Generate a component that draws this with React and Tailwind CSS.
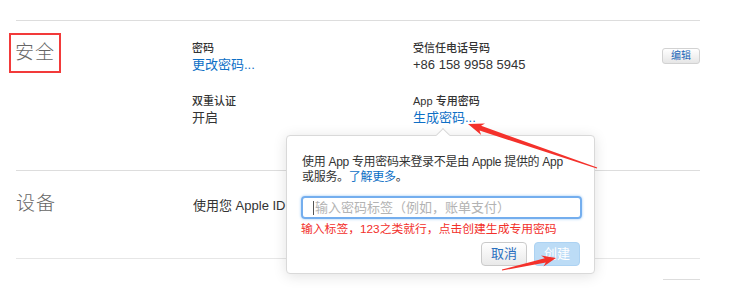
import React from "react";

const font = {
  fontFamily: '"Liberation Sans", "Noto Sans CJK SC", sans-serif',
};

const Field = ({ label, value, link }) => (
  <div className="flex flex-col">
    <span className="text-[11px] leading-[16px] text-[#333] font-medium">{label}</span>
    <span
      className={
        "text-[13px] leading-[17px] " + (link ? "text-[#0d6fc6]" : "text-[#333]")
      }
    >
      {value}
    </span>
  </div>
);

const Arrows = () => (
  <svg
    className="absolute inset-0 pointer-events-none"
    width="735"
    height="302"
    viewBox="0 0 735 302"
  >
    <polygon
      fill="#f4312b"
      points="468,124 485,123.5 481.1,125.8 597.2,167.5 596.8,168.5 479.5,130.6 481.2,134.9"
    />
    <polygon
      fill="#f4312b"
      points="556,258 541.1,255.6 544.8,258.3 501.9,269.5 502.1,270.5 545.8,262.5 543.5,266.4"
    />
  </svg>
);

const Popover = () => (
  <div className="absolute left-[286px] top-[135px] w-[309px] h-[139px] bg-white border border-[#d9d9d9] rounded-[4px] shadow-[0_2px_14px_rgba(0,0,0,0.12)]">
    <div className="absolute left-[151px] -top-[6px] w-[10px] h-[10px] bg-white border-l border-t border-[#d9d9d9] rotate-45" />
    <div className="relative px-[15px] pt-[19px]">
      <p className="text-[12px] tracking-[-0.3px] leading-[15px] text-[#333] whitespace-nowrap">
        使用 App 专用密码来登录不是由 Apple 提供的 App
        <br />
        或服务。<span className="text-[#0d6fc6]">了解更多</span>。
      </p>
      <div className="-ml-[1px] mt-[11px] w-[281px] h-[23px] border-2 border-[#74aeee] rounded-[4px] shadow-[0_0_3px_#9cc8f5] flex items-center pl-[10px] gap-[1px]">
        <span className="w-px h-[14px] bg-[#555]" />
        <span className="text-[13px] text-[#b3b3b3]">输入密码标签（例如，账单支付）</span>
      </div>
      <p className="-ml-[1px] mt-[3px] text-[11.8px] leading-[15px] text-[#f2302b] whitespace-nowrap">
        输入标签，123之类就行，点击创建生成专用密码
      </p>
      <div className="flex justify-end gap-[7px] mt-[5px] mr-[-1px]">
        <button className="w-[46px] h-[24px] rounded-[4px] border border-[#cacaca] bg-gradient-to-b from-white to-[#e9e9e9] text-[13px] text-[#2a6fbf]">
          取消
        </button>
        <button className="w-[46px] h-[24px] rounded-[4px] border border-[#acd2f2] bg-[#bcdcf6] text-[13px] text-white">
          创建
        </button>
      </div>
    </div>
  </div>
);

export default function App() {
  return (
    <div className="relative w-[735px] h-[302px] bg-white overflow-hidden pt-[20px]" style={font}>
      <div className="ml-[16px] w-[684px]">
        {/* 安全 */}
        <section className="border-t border-[#dddddd] h-[150px] flex">
          <div className="w-[176px]">
            <div className="-ml-[7px] mt-[12px] w-[52px] h-[40px] border-2 border-[#f23a3a] flex items-center justify-center">
              <span className="text-[19px] font-light text-[#666] tracking-[1px]">安全</span>
            </div>
          </div>
          <div className="w-[221px] pt-[19px] flex flex-col gap-[20px]">
            <Field label="密码" value="更改密码..." link />
            <Field label="双重认证" value="开启" />
          </div>
          <div className="w-[249px] pt-[19px] flex flex-col gap-[20px]">
            <Field label="受信任电话号码" value="+86 158 9958 5945" />
            <Field label="App 专用密码" value="生成密码..." link />
          </div>
          <div className="pt-[21px]">
            <button className="w-[38px] h-[16px] rounded-[3px] border border-[#d2d2d2] bg-gradient-to-b from-white to-[#e6e6e6] text-[10px] leading-[14px] text-[#2266b8]">
              编辑
            </button>
          </div>
        </section>

        {/* 设备 */}
        <section className="border-t border-[#dddddd] h-[88px] flex">
          <div className="w-[177px] pt-[20px]">
            <span className="text-[19px] leading-[26px] font-light text-[#666] tracking-[1px]">设备</span>
          </div>
          <div className="pt-[25px] w-[93px] overflow-hidden">
            <span className="block whitespace-nowrap text-[13px] text-[#333]">使用您 Apple ID 登</span>
          </div>
        </section>

        <div className="border-t border-[#e6e6e6]" />
        <div className="ml-[647px] w-[37px] mt-[20px] border-t border-[#dddddd]" />
      </div>

      <Popover />
      <Arrows />
    </div>
  );
}
